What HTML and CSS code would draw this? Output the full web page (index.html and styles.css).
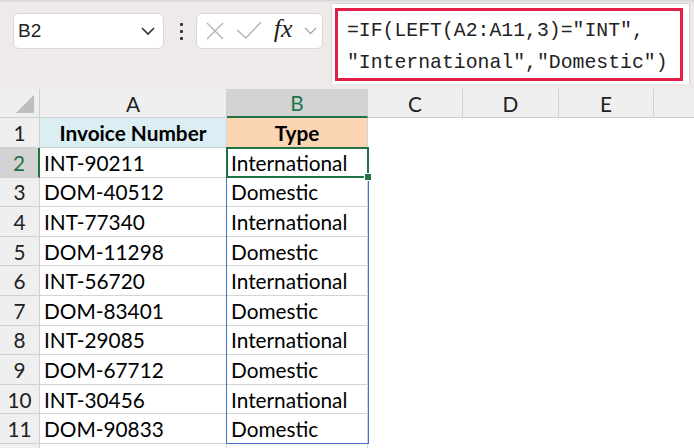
FILE: index.html
```html
<!DOCTYPE html><html lang="en"><head><meta charset="utf-8">
<title>Sheet · LEFT formula</title>
<link rel="stylesheet" href="styles.css">
</head>
<body>
  <!-- formula bar -->
  <div class="toolbar">
    <div class="namebox">
      <span>B2</span>
      <svg width="14" height="10" viewBox="0 0 14 10"><polyline points="1,2 7,8 13,2" fill="none" stroke="#333" stroke-width="1.6"/></svg>
    </div>
    <div class="dots"><i></i><i></i><i></i></div>
    <div class="fxbox">
      <svg width="20" height="20" viewBox="0 0 20 20"><path d="M2 2L18 18M18 2L2 18" stroke="#b4b4b4" stroke-width="1.4" fill="none"/></svg>
      <svg width="26" height="20" viewBox="0 0 26 20"><polyline points="1,9 10,17 25,1" fill="none" stroke="#b4b4b4" stroke-width="1.4"/></svg>
      <span class="fx">fx</span>
      <svg width="13" height="8" viewBox="0 0 13 8"><polyline points="1,1 6.5,6.5 12,1" fill="none" stroke="#a8a8a8" stroke-width="1.3"/></svg>
    </div>
    <div class="formula">
      <div class="highlight">=IF(LEFT(A2:A11,3)="INT",<br>"International","Domestic")</div>
    </div>
  </div>

  <!-- worksheet -->
  <div class="sheet">
    <div class="grid">
      <div class="colhead corner"><b></b></div>
      <div class="colhead">A</div>
      <div class="colhead sel">B</div>
      <div class="colhead">C</div>
      <div class="colhead">D</div>
      <div class="colhead">E</div>
      <div class="colhead last"></div>

      <div class="rowhead">1</div>
      <div class="cell title blue">Invoice Number</div>
      <div class="cell title peach">Type</div>
      <div class="blank"></div><div class="blank"></div><div class="blank"></div><div class="blank"></div>

      <div class="rowhead sel">2</div>
      <div class="cell">INT-90211</div><div class="cell">International</div>
      <div class="blank"></div><div class="blank"></div><div class="blank"></div><div class="blank"></div>

      <div class="rowhead">3</div>
      <div class="cell">DOM-40512</div><div class="cell">Domestic</div>
      <div class="blank"></div><div class="blank"></div><div class="blank"></div><div class="blank"></div>

      <div class="rowhead">4</div>
      <div class="cell">INT-77340</div><div class="cell">International</div>
      <div class="blank"></div><div class="blank"></div><div class="blank"></div><div class="blank"></div>

      <div class="rowhead">5</div>
      <div class="cell">DOM-11298</div><div class="cell">Domestic</div>
      <div class="blank"></div><div class="blank"></div><div class="blank"></div><div class="blank"></div>

      <div class="rowhead">6</div>
      <div class="cell">INT-56720</div><div class="cell">International</div>
      <div class="blank"></div><div class="blank"></div><div class="blank"></div><div class="blank"></div>

      <div class="rowhead">7</div>
      <div class="cell">DOM-83401</div><div class="cell">Domestic</div>
      <div class="blank"></div><div class="blank"></div><div class="blank"></div><div class="blank"></div>

      <div class="rowhead">8</div>
      <div class="cell">INT-29085</div><div class="cell">International</div>
      <div class="blank"></div><div class="blank"></div><div class="blank"></div><div class="blank"></div>

      <div class="rowhead">9</div>
      <div class="cell">DOM-67712</div><div class="cell">Domestic</div>
      <div class="blank"></div><div class="blank"></div><div class="blank"></div><div class="blank"></div>

      <div class="rowhead">10</div>
      <div class="cell">INT-30456</div><div class="cell">International</div>
      <div class="blank"></div><div class="blank"></div><div class="blank"></div><div class="blank"></div>

      <div class="rowhead">11</div>
      <div class="cell">DOM-90833</div><div class="cell">Domestic</div>
      <div class="blank"></div><div class="blank"></div><div class="blank"></div><div class="blank"></div>

      <div class="rowhead stub"></div>
      <div class="cell stub"></div><div class="cell stub"></div>
      <div class="blank"></div><div class="blank"></div><div class="blank"></div><div class="blank"></div>
    </div>

    <!-- spill range + active cell -->
    <div class="spill"></div>
    <div class="active"><span class="handle"></span></div>
  </div>
</body></html>
```

FILE: styles.css
```css
:root{
  --bar-bg:#eeeaea;
  --box-border:#dad6d6;
  --grid:#d4d4d4;
  --head-bg:#efefef;
  --head-sel:#d3d3d3;
  --green:#217346;
  --spill:#4472c4;
  --red:#e11d48;
}
*{box-sizing:border-box}
body{
  margin:0;width:694px;height:448px;overflow:hidden;background:#fff;color:#000;
  font-family:Lato,"Liberation Sans",Arial,sans-serif;
}

/* ---------- formula bar ---------- */
.toolbar{
  height:89px;display:flex;align-items:flex-start;background:var(--bar-bg);
  box-shadow:inset 0 3px 3px -2px rgba(0,0,0,.12);
}
.namebox,.fxbox{
  margin-top:13px;height:36px;background:#fff;border:1px solid var(--box-border);border-radius:6px;
  display:flex;align-items:center;
}
.namebox{
  margin-left:13px;width:151px;padding:0 8px 0 4px;justify-content:space-between;
  font-family:"Liberation Sans",Arial,sans-serif;font-size:19px;color:#222;
}
.dots{display:flex;flex-direction:column;gap:4px;margin:23px 13px 0 16px}
.dots i{width:3px;height:3px;background:#333;border-radius:1px}
.fxbox{width:127px;padding:0 5px 0 8px;justify-content:space-between}
.fx{font-family:"Liberation Serif","DejaVu Serif",serif;font-style:italic;font-size:26px;color:#222;margin-top:-4px}
.formula{
  margin:3px 4px 0 8px;flex:1;height:81px;background:#fff;border-left:1px solid var(--box-border);
  border-top:1px solid var(--box-border);border-right:1px solid var(--box-border);
  padding:4px 0 0 3px;
}
.highlight{
  width:348px;height:73px;border:3px solid var(--red);padding:4px 0 0 9px;
  font-family:"Liberation Mono","DejaVu Sans Mono",monospace;font-size:19.8px;line-height:32px;color:#222;
  white-space:nowrap;
}

/* ---------- grid ---------- */
.sheet{position:relative}
.grid{
  display:grid;
  grid-template-columns:40px 187px 141px 95px 96px 95px 1fr;
  grid-template-rows:29px 30px repeat(10,29.6px) 4px;
  font-size:20.8px;
}
.colhead{
  background:var(--head-bg);border-right:1px solid #d0d0d0;border-bottom:1px solid #d0d0d0;
  display:flex;align-items:center;justify-content:center;color:#222;
}
.colhead.last{border-right:none}
.colhead.sel{background:var(--head-sel);color:var(--green);border-bottom:2px solid var(--green)}
.corner{position:relative}
.corner b{
  position:absolute;right:5px;bottom:4px;width:18px;height:18px;background:#bdbdbd;
  clip-path:polygon(100% 0,100% 100%,0 100%);
}
.rowhead{
  background:var(--head-bg);border-right:1px solid #d0d0d0;border-bottom:1px solid #d0d0d0;
  display:flex;align-items:center;justify-content:center;color:#222;
}
.rowhead.sel{background:var(--head-sel);color:var(--green);border-right:2px solid var(--green)}
.cell{
  border-right:1px solid var(--grid);border-bottom:1px solid var(--grid);
  display:flex;align-items:center;padding-left:4px;white-space:nowrap;
}
.stub{border-bottom:none}
.title{font-weight:700;justify-content:center;padding-left:0}
.blue{background:#dbeef4}
.peach{background:#fcd5b4}
.blank{background:#fff}

/* overlays */
.spill{
  position:absolute;left:226px;top:58px;width:143px;height:297px;
  border:1.5px solid var(--spill);
}
.active{
  position:absolute;left:226px;top:58px;width:143px;height:31px;
  border:2px solid var(--green);
}
.handle{
  position:absolute;right:-5px;bottom:-5px;width:8px;height:8px;background:var(--green);
  border:1px solid #fff;
}
```
